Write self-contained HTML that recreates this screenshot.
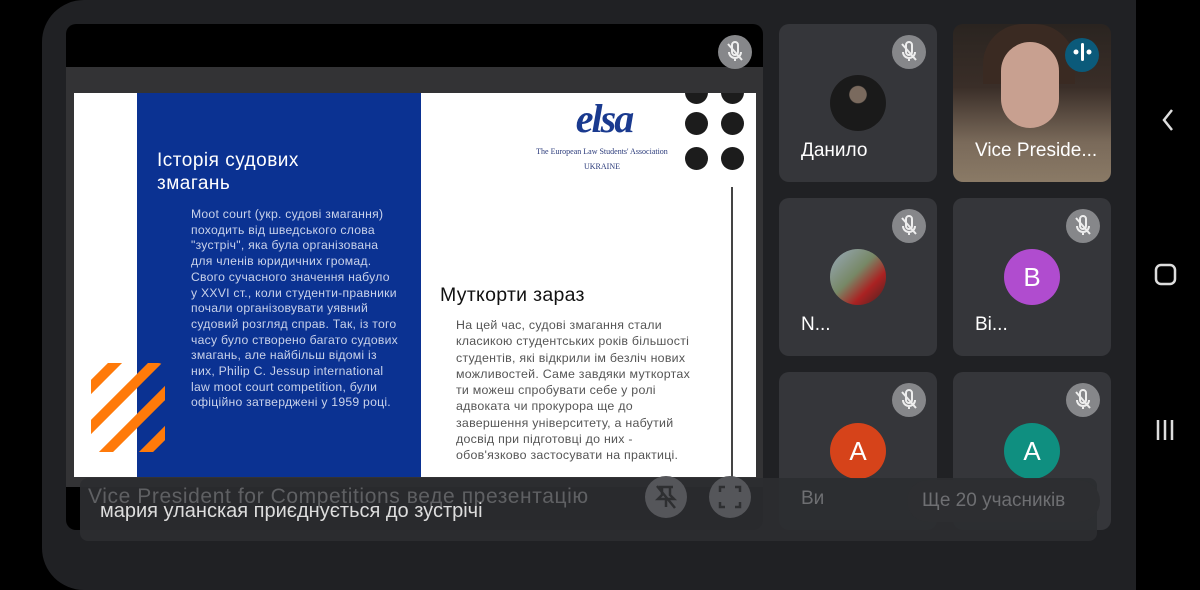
<!DOCTYPE html>
<html><head><meta charset="utf-8"><style>
*{margin:0;padding:0;box-sizing:border-box}
body{width:1200px;height:554px;background:#000;position:relative;overflow:hidden;font-family:"Liberation Sans","Noto Sans CJK SC",sans-serif}
.abs{position:absolute}
.frame{left:42px;top:0;width:1094px;height:590px;background:#202124;border-radius:42px 0 0 42px}
.nav{left:1136px;top:0;width:64px;height:554px;background:#000}
.stage{left:66px;top:24px;width:697px;height:506px;background:#000;border-radius:10px;overflow:hidden}
.gray{left:0;top:43px;width:697px;height:420px;background:#333335}
.slide{left:8px;top:69px;width:682px;height:384px;background:#fff;overflow:hidden}
.blue{left:63px;top:0;width:284px;height:384px;background:#0b3292}
.t1{left:83px;top:56px;color:#fff;font-size:19px;line-height:23px;letter-spacing:.5px}
.b1{left:117px;top:114px;color:#c9d2ea;font-size:12.2px;line-height:15.7px;white-space:nowrap;letter-spacing:.25px}
.t2{left:366px;top:191px;color:#111;font-size:19.5px;letter-spacing:.3px}
.b2{left:382px;top:224px;color:#555;font-size:12.4px;line-height:16.3px;white-space:nowrap;letter-spacing:.25px}
.dot{width:23px;height:23px;border-radius:50%;background:#1c1c1c}
.tile{width:158px;height:158px;background:#35363a;border-radius:10px;overflow:hidden}
.mute{width:34px;height:34px;border-radius:50%;background:#86878a}
.av{width:56px;height:56px;border-radius:50%;color:#fff;font-size:26px;text-align:center;line-height:56px}
.name{color:#fff;font-size:19px}
</style></head><body>
<div class="abs frame"></div>
<div class="abs nav">
 <svg width="64" height="554" style="position:absolute;left:0;top:0">
  <path d="M36 110 L28 120 L36 130" stroke="#ddd" stroke-width="2.5" fill="none"/>
  <rect x="20" y="265" width="19" height="19" rx="5" stroke="#ddd" stroke-width="2.5" fill="none"/>
  <path d="M22 420v20M29 420v20M36 420v20" stroke="#ddd" stroke-width="2.5"/>
 </svg>
</div>
<div class="abs stage">
 <div class="abs gray"></div>
 <div class="abs mute" style="left:652px;top:11px"></div>
 <svg class="abs" style="left:652px;top:11px" width="34" height="34"><path d="M14 10a3 3 0 0 1 6 0v7a3 3 0 0 1-6 0z M11 17a6 6 0 0 0 12 0 M17 23v3 M10 9l14 16" stroke="#eee" stroke-width="2" fill="none"/></svg>
 <div class="abs slide">
  <div class="abs blue"></div>
  <div class="abs t1">Історія судових<br>змагань</div>
  <div class="abs b1">Moot court (укр. судові змагання)<br>походить від шведського слова<br>"зустріч", яка була організована<br>для членів юридичних громад.<br>Свого сучасного значення набуло<br>у XXVI ст., коли студенти-правники<br>почали організовувати уявний<br>судовий розгляд справ. Так, із того<br>часу було створено багато судових<br>змагань, але найбільш відомі із<br>них, Philip C. Jessup international<br>law moot court competition, були<br>офіційно затверджені у 1959 році.</div>
  <svg class="abs" style="left:17px;top:270px" width="74" height="90">
   <defs><clipPath id="c"><rect x="0" y="0" width="74" height="89" rx="7"/></clipPath></defs>
   <g clip-path="url(#c)" stroke="#ff7a0a" stroke-width="10">
    <path d="M-10 34 L34 -10"/><path d="M-10 74 L74 -10"/><path d="M10 94 L94 10"/><path d="M50 94 L94 50"/>
   </g>
  </svg>
  <div class="abs t2">Муткорти зараз</div>
  <div class="abs b2">На цей час, судові змагання стали<br>класикою студентських років більшості<br>студентів, які відкрили ім безліч нових<br>можливостей. Саме завдяки муткортах<br>ти можеш спробувати себе у ролі<br>адвоката чи прокурора ще до<br>завершення університету, а набутий<br>досвід при підготовці до них -<br>обов'язково застосувати на практиці.</div>
  <div class="abs" style="left:455px;top:6px;width:150px;text-align:center;color:#1a3a8f;font-family:'Liberation Serif',serif;font-style:italic;font-weight:bold;font-size:40px;line-height:40px;letter-spacing:-2px">elsa</div>
  <div class="abs" style="left:453px;top:51px;width:150px;text-align:center;color:#2a3a7a;font-family:'Liberation Serif',serif;font-size:8px;line-height:15px">The European Law Students' Association<br>UKRAINE</div>
  <div class="abs dot" style="left:611px;top:-12px"></div><div class="abs dot" style="left:647px;top:-12px"></div>
  <div class="abs dot" style="left:611px;top:19px"></div><div class="abs dot" style="left:647px;top:19px"></div>
  <div class="abs dot" style="left:611px;top:54px"></div><div class="abs dot" style="left:647px;top:54px"></div>
  <div class="abs" style="left:657px;top:94px;width:2px;height:290px;background:#444"></div>
 </div>
</div>
<!-- tiles -->
<div class="abs tile" style="left:779px;top:24px">
 <div class="abs av" style="left:51px;top:51px;background:radial-gradient(circle at 50% 35%,#7a6a5e 0 18%,#1a1a1a 20%)"></div>
 <div class="abs name" style="left:22px;top:116px">Данило</div>
</div>
<div class="abs mute" style="left:892px;top:35px"></div>
<div class="abs tile" style="left:953px;top:24px;background:linear-gradient(180deg,#2a2420 0%,#3a2e28 40%,#7a6a5a 75%,#8a7a66 100%)">
 <div class="abs" style="left:30px;top:0px;width:92px;height:60px;border-radius:40px 40px 0 0;background:#3a2a22"></div>
 <div class="abs" style="left:48px;top:18px;width:58px;height:86px;border-radius:30px;background:#c8a090"></div>
 <div class="abs" style="left:112px;top:14px;width:34px;height:34px;border-radius:50%;background:#0b5a7a"></div>
 <div class="abs name" style="left:22px;top:116px">Vice Preside...</div>
</div>
<div class="abs tile" style="left:779px;top:198px">
 <div class="abs av" style="left:51px;top:51px;background:linear-gradient(135deg,#9ab 0%,#786 45%,#a22 70%,#422 100%)"></div>
 <div class="abs name" style="left:22px;top:116px">N...</div>
</div>
<div class="abs mute" style="left:892px;top:209px"></div>
<div class="abs tile" style="left:953px;top:198px">
 <div class="abs av" style="left:51px;top:51px;background:#b04ccf">B</div>
 <div class="abs name" style="left:22px;top:116px">Bi...</div>
</div>
<div class="abs mute" style="left:1066px;top:209px"></div>
<div class="abs tile" style="left:779px;top:372px">
 <div class="abs av" style="left:51px;top:51px;background:#d6431a">A</div>
</div>
<div class="abs mute" style="left:892px;top:383px"></div>
<div class="abs tile" style="left:953px;top:372px">
 <div class="abs av" style="left:51px;top:51px;background:#0f8f80">A</div>
</div>
<div class="abs mute" style="left:1066px;top:383px"></div>
<svg class="abs" style="left:0;top:0" width="1200" height="554">
 <g stroke="#eee" stroke-width="2" fill="none">
  <g transform="translate(892,35)"><path d="M14 10a3 3 0 0 1 6 0v7a3 3 0 0 1-6 0z M11 17a6 6 0 0 0 12 0 M17 23v3 M10 9l14 16"/></g>
  <g transform="translate(892,209)"><path d="M14 10a3 3 0 0 1 6 0v7a3 3 0 0 1-6 0z M11 17a6 6 0 0 0 12 0 M17 23v3 M10 9l14 16"/></g>
  <g transform="translate(1066,209)"><path d="M14 10a3 3 0 0 1 6 0v7a3 3 0 0 1-6 0z M11 17a6 6 0 0 0 12 0 M17 23v3 M10 9l14 16"/></g>
  <g transform="translate(892,383)"><path d="M14 10a3 3 0 0 1 6 0v7a3 3 0 0 1-6 0z M11 17a6 6 0 0 0 12 0 M17 23v3 M10 9l14 16"/></g>
  <g transform="translate(1066,383)"><path d="M14 10a3 3 0 0 1 6 0v7a3 3 0 0 1-6 0z M11 17a6 6 0 0 0 12 0 M17 23v3 M10 9l14 16"/></g>
 </g>
 <g fill="#fff"><circle cx="1076" cy="52" r="2.5"/><rect x="1081" y="43" width="3" height="18" rx="1.5"/><circle cx="1089" cy="52" r="2.5"/></g>
</svg>
<!-- bottom overlay -->
<div class="abs" style="left:80px;top:478px;width:1017px;height:63px;background:rgba(44,45,48,0.93);border-radius:8px"></div>
<div class="abs" style="left:88px;top:485px;color:#5f6063;font-size:21px;white-space:nowrap;letter-spacing:.6px">Vice President for Competitions веде презентацію</div>
<div class="abs" style="left:100px;top:500px;color:#ddd;font-size:20px;white-space:nowrap">мария уланская приєднується до зустрічі</div>
<div class="abs" style="left:645px;top:476px;width:42px;height:42px;border-radius:50%;background:#55565a"></div>
<div class="abs" style="left:709px;top:476px;width:42px;height:42px;border-radius:50%;background:#55565a"></div>
<svg class="abs" style="left:0;top:0" width="1200" height="554">
 <g stroke="#2e2f31" stroke-width="2.5" fill="none">
  <path d="M659 487h14M662 487v8l-4 4h16l-4-4v-8M666 499v8M657 486l18 22"/>
  <path d="M720 492v-5h5M740 492v-5h-5M720 502v5h5M740 502v5h-5"/>
 </g>
</svg>
<div class="abs" style="left:801px;top:488px;color:#6e6f72;font-size:19px">Ви</div>
<div class="abs" style="left:907px;top:480px;width:193px;height:42px;border-radius:21px;background:#2d2e31"></div>
<div class="abs" style="left:922px;top:490px;color:#6e6f72;font-size:19px;white-space:nowrap">Ще 20 учасників</div>
</body></html>
